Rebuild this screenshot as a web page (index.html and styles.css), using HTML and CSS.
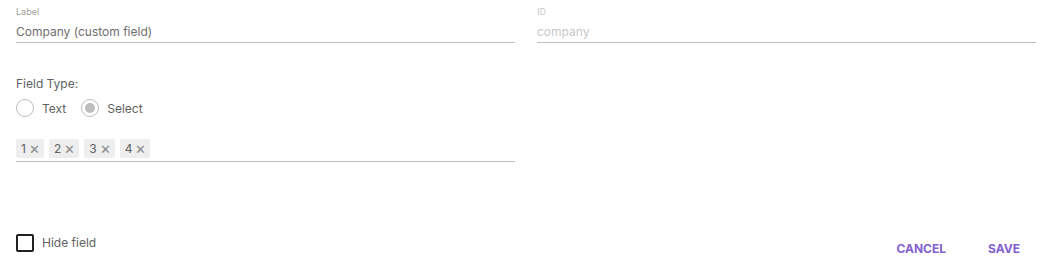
FILE: index.html
```html
<!DOCTYPE html>
<html>
<head>
<title>Custom field</title>
<meta name="viewport" content="width=device-width,initial-scale=1"/>
<link rel="stylesheet" href="styles.css">
</head>
<body>
<div class="form">
	<div class="row">
		<div class="field">
			<div class="field-label">Label</div>
			<div class="field-value">Company (custom field)</div>
		</div>
		<div class="field disabled">
			<div class="field-label">ID</div>
			<div class="field-value">company</div>
		</div>
	</div>

	<div class="type">
		<div class="type-title">Field Type:</div>
		<div class="radios">
			<label class="radio"><span class="dot"></span>Text</label>
			<label class="radio checked"><span class="dot"></span>Select</label>
		</div>
	</div>

	<div class="row">
		<div class="chips">
			<span class="chip">1<span class="x">&#x2715;</span></span>
			<span class="chip">2<span class="x">&#x2715;</span></span>
			<span class="chip">3<span class="x">&#x2715;</span></span>
			<span class="chip">4<span class="x">&#x2715;</span></span>
		</div>
		<div></div>
	</div>

	<div class="footer">
		<label class="check"><span class="box"></span>Hide field</label>
		<div class="actions">
			<button class="btn">Cancel</button>
			<button class="btn">Save</button>
		</div>
	</div>
</div>
</body>
</html>
```

FILE: styles.css
```css
body {
	margin: 0;
	background-color: white;
	font-family: Inter, "Noto Sans", sans-serif;
	color: #666;
}
.form {
	padding: 6px 10px 0 16px;
}
.row {
	display: grid;
	grid-template-columns: 1fr 1fr;
	column-gap: 22px;
}
.field {
	border-bottom: 1px solid #bdbdbd;
	padding-bottom: 2px;
}
.field-label {
	font-size: 9px;
	color: #a0a0a0;
	line-height: 12px;
}
.field-value {
	font-size: 12px;
	line-height: 16px;
	margin-top: 6px;
	color: #6e6e6e;
}
.disabled .field-label,
.disabled .field-value {
	color: #c8c8c8;
}
.type {
	margin-top: 33px;
}
.type-title {
	font-size: 12px;
	line-height: 16px;
	color: #616161;
}
.radios {
	display: flex;
	margin-top: 7px;
}
.radio {
	display: flex;
	align-items: center;
	font-size: 12px;
	margin-right: 15px;
	color: #616161;
}
.dot {
	width: 16px;
	height: 16px;
	border: 1.5px solid #bdbdbd;
	border-radius: 50%;
	margin-right: 8px;
	position: relative;
}
.checked .dot::after {
	content: "";
	position: absolute;
	left: 3px;
	top: 3px;
	width: 10px;
	height: 10px;
	border-radius: 50%;
	background-color: #bdbdbd;
}
.chips {
	display: flex;
	gap: 5px;
	margin-top: 22px;
	padding-bottom: 3px;
	border-bottom: 1px solid #bdbdbd;
}
.chip {
	display: flex;
	align-items: center;
	background-color: #eeeeee;
	border-radius: 2px;
	padding: 0 4px 0 5px;
	height: 19px;
	font-size: 12px;
	color: #616161;
}
.x {
	font-size: 13px;
	color: #8a8a8a;
	margin-left: 3px;
}
.footer {
	display: flex;
	justify-content: space-between;
	align-items: center;
	margin-top: 71px;
}
.check {
	display: flex;
	align-items: center;
	font-size: 12px;
	color: #616161;
	margin-top: -12px;
}
.box {
	width: 14px;
	height: 14px;
	border: 2px solid #212121;
	border-radius: 2px;
	margin-right: 8px;
}
.actions {
	display: flex;
	gap: 10px;
}
.btn {
	background: none;
	border: none;
	font-family: Inter, "Noto Sans", sans-serif;
	font-size: 12px;
	font-weight: 700;
	text-transform: uppercase;
	color: #8461cf;
	padding: 8px 16px;
}
```
